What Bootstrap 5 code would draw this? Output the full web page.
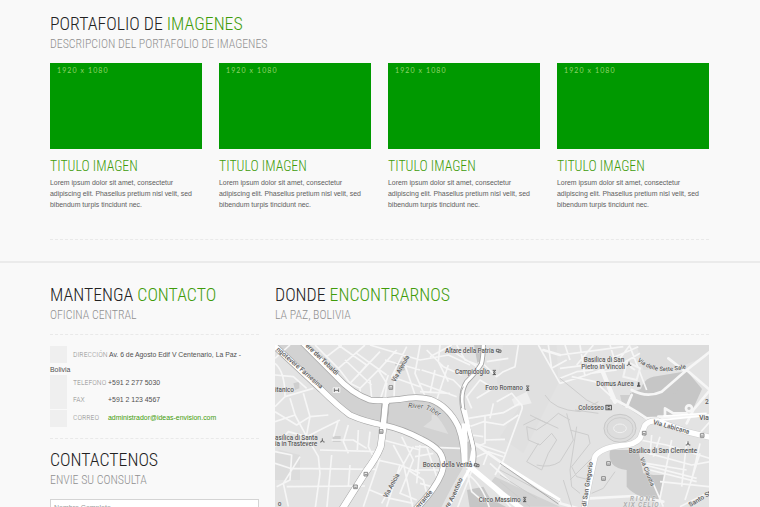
<!DOCTYPE html>
<html lang="es">
<head>
<meta charset="utf-8">
<meta name="viewport" content="width=device-width, initial-scale=1">
<title>Portafolio de imagenes</title>
<link href="https://cdn.jsdelivr.net/npm/bootstrap@5.3.0/dist/css/bootstrap.min.css" rel="stylesheet">
<style>
html,body{height:507px;overflow:hidden}
body{background:#f9f9f9;color:#666;font:6.93px/11.2px "Liberation Sans",Arial,sans-serif}
.page-wrap{width:659px;margin-left:50px}
.title,.subtitle,.item-title,.field-label{font-family:Roboto,sans-serif;font-stretch:75%;font-weight:300;margin:0;white-space:nowrap}
.title{font-size:17.8px;line-height:20px;color:#222}
.title span,.item-title{color:#3f9c0b}
.subtitle{font-size:11.88px;line-height:16px;color:#909090;margin-top:2px}
.item-title{font-size:13.85px;line-height:18px;margin:8px 0 2px}
.portfolio{padding-top:14px;height:261px}
.gallery{display:grid;grid-template-columns:repeat(4,152px);column-gap:17px;margin-top:11px}
.thumb{height:86px;background:#009900;color:#8fd468;font:7px/9px Lato,sans-serif;letter-spacing:1.1px;padding:3px 0 0 7px}
.item-text{white-space:nowrap;color:#606060}
.dashed{border-top:1px dashed #e9e9e9}
.portfolio .dashed{margin-top:28px}
.col-contact .dashed{margin:11px 0}
.col-map .dashed{margin:11px 0 10px}
.divider{height:2px;background:#ebebeb}
.lower{padding-top:22px}
.col-contact{width:209px}
.col-map{width:434px}
.swatch{width:17px;height:17px;background:#efefef;margin-right:6px;flex:none}
.entry{height:17.5px;line-height:15.6px;white-space:nowrap}
.entry-first{line-height:17px}
.field-label{font-size:7.8px;width:35px;color:#909090;flex:none}
.entry-first .field-label{width:36px}
.value{color:#505050}
.entry-first .value{font-size:6.85px}
.mail{color:#3f9c0b;text-decoration:none}
.field{font:7px/12px "Liberation Sans",Arial,sans-serif;height:17px;border:1px solid #d4d4d4;border-radius:0;padding:0 3px;background:#fff;min-height:0;margin-top:11px}
.field::placeholder{color:#999;opacity:1}
.map{width:434px;height:162px}
.map text{font-family:Roboto,sans-serif;font-size:19.5px;font-weight:500;fill:#5a5a5a;stroke:#ececec;stroke-width:2px;paint-order:stroke;stroke-linejoin:round}
</style>
</head>
<body>
<section class="portfolio">
 <div class="page-wrap">
  <h2 class="title">PORTAFOLIO DE <span>IMAGENES</span></h2>
  <h3 class="subtitle">DESCRIPCION DEL PORTAFOLIO DE IMAGENES</h3>
  <div class="gallery">
   <article><div class="thumb">1920 x 1080</div><h4 class="item-title">TITULO IMAGEN</h4><p class="item-text mb-0">Lorem ipsum dolor sit amet, consectetur<br>adipiscing elit. Phasellus pretium nisl velit, sed<br>bibendum turpis tincidunt nec.</p></article>
   <article><div class="thumb">1920 x 1080</div><h4 class="item-title">TITULO IMAGEN</h4><p class="item-text mb-0">Lorem ipsum dolor sit amet, consectetur<br>adipiscing elit. Phasellus pretium nisl velit, sed<br>bibendum turpis tincidunt nec.</p></article>
   <article><div class="thumb">1920 x 1080</div><h4 class="item-title">TITULO IMAGEN</h4><p class="item-text mb-0">Lorem ipsum dolor sit amet, consectetur<br>adipiscing elit. Phasellus pretium nisl velit, sed<br>bibendum turpis tincidunt nec.</p></article>
   <article><div class="thumb">1920 x 1080</div><h4 class="item-title">TITULO IMAGEN</h4><p class="item-text mb-0">Lorem ipsum dolor sit amet, consectetur<br>adipiscing elit. Phasellus pretium nisl velit, sed<br>bibendum turpis tincidunt nec.</p></article>
  </div>
  <div class="dashed"></div>
 </div>
</section>
<div class="divider"></div>
<section class="lower">
 <div class="page-wrap d-flex justify-content-between">
  <div class="col-contact">
   <h2 class="title">MANTENGA <span>CONTACTO</span></h2>
   <h3 class="subtitle">OFICINA CENTRAL</h3>
   <div class="dashed"></div>
   <div class="entry entry-first d-flex"><span class="swatch"></span><span class="field-label">DIRECCIÓN</span><span class="value">Av. 6 de Agosto Edif V Centenario, La Paz -</span></div>
   <div class="value">Bolivia</div>
   <div class="entry d-flex"><span class="swatch"></span><span class="field-label">TELEFONO</span><span class="value">+591 2 277 5030</span></div>
   <div class="entry d-flex"><span class="swatch"></span><span class="field-label">FAX</span><span class="value">+591 2 123 4567</span></div>
   <div class="entry d-flex"><span class="swatch"></span><span class="field-label">CORREO</span><a class="mail" href="#">administrador@ideas-envision.com</a></div>
   <div class="dashed"></div>
   <h2 class="title">CONTACTENOS</h2>
   <h3 class="subtitle">ENVIE SU CONSULTA</h3>
   <input class="field form-control" placeholder="Nombre Completo">
  </div>
  <div class="col-map">
   <h2 class="title">DONDE <span>ENCONTRARNOS</span></h2>
   <h3 class="subtitle">LA PAZ, BOLIVIA</h3>
   <div class="dashed"></div>
   <svg class="map d-block" viewBox="15 15 1302 486" preserveAspectRatio="none">
    <defs>
     <path id="bankL" d="M0 5L155 150Q200 195 240 225Q285 245 340 255Q400 268 455 298Q490 315 508 335Q528 365 515 400Q495 450 435 510"/>
     <path id="bankR" d="M95 5L200 110Q245 160 300 180Q320 184 390 178Q440 168 480 178Q535 198 565 260Q584 310 583 380"/>
     <path id="bridge" d="M348 182L341 255L332 320Q320 352 287 396L215 510"/>
     <path id="core" d="M640 10Q640 50 634 72Q620 95 590 125Q570 155 578 205Q590 250 603 295Q618 345 608 375"/>
     <path id="labic" d="M1320 292L1250 275L1165 243Q1137 240 1125 256L1110 295Q1095 315 1050 317Q990 325 975 350Q963 400 942 510"/>
     <path id="t1" d="M18 30L178 169"/><path id="t2" d="M106 19L215 122"/>
     <path id="t3" d="M466 209Q490 214 535 252"/>
     <path id="t4" d="M1102 62Q1160 117 1275 76"/>
     <path id="t5" d="M1148 252L1290 291"/>
     <path id="t6" d="M1109 355L1155 470"/>
     <path id="t7" d="M948 500L973 340"/>
     <path id="t8" d="M535 505Q565 460 587 390"/>
    </defs>
    <rect x="15" y="15" width="1302" height="486" fill="#e3e3e3"/>
    <g fill="#dcdcdc">
     <path d="M700 15H860L865 130L760 340L690 290L755 190L680 130Z" fill="#e0e0e0"/>
     <path d="M1100 15H1317V45L1220 85L1120 90Z"/><path d="M30 330L90 345V420L15 420V335Z"/>
     <path d="M675 410L870 500H735L660 430Z" fill="#d2d2d2"/>
     <path d="M725 178L770 155L785 190L735 200Z" fill="#eee"/>
    </g>
    <g fill="#c6c6c6">
     <path d="M25 5H85L190 110Q245 165 300 183L485 180Q545 205 570 270L578 385Q550 430 510 510H435Q512 440 520 385Q520 325 440 287Q390 260 340 252Q270 245 235 218L150 140L15 15Z" fill="#d2d2d2"/>
     <path d="M612 15H645V55L622 68Z"/><path d="M585 310Q605 295 612 315V365L592 370Z"/>
     <path d="M1080 160L1250 92L1296 147L1265 215L1185 240L1120 235L1075 205Z"/><path d="M1150 110Q1110 120 1110 170L1220 160L1240 95Z"/>
     <path d="M1020 330H1105L1120 400L1150 405H1185L1165 480Q1100 475 1070 440V390Q1010 385 1020 330Z"/>
     <path d="M591 450L640 440L660 475L725 510H600Z"/>
     <path d="M374 68L397 62L405 90L385 98Z"/><path d="M188 288H212V306H188ZM70 130L88 125V145L75 150Z" fill="#cecece"/>
     <path d="M1050 165H1080V205L1058 198Z" fill="#cecece"/>
     <path d="M485 225Q500 215 535 282L460 260L485 240Z" fill="#dedede"/>
    </g>
    <g fill="none" stroke="#f6f6f6" stroke-width="5" stroke-linejoin="round">
     <path d="M15 70Q45 95 45 170L15 200M45 170L130 145M60 175L75 225L110 290L145 350L150 400L135 510M15 105L70 110L110 145M75 225L15 245M100 160L120 230L175 225M120 230L105 310M15 320L55 275L110 290L160 265L210 240M15 370L60 385L320 388M50 440L285 438M90 350L40 430L55 500M15 335L65 345L60 420L20 440M185 345L170 510M240 375L235 440M150 330L330 335M185 300L250 300L290 325M205 240L190 290M235 255L220 305L235 340M265 270L262 330M300 275L295 320L310 350M15 215L80 255L120 230"/>
     <path d="M135 15L205 85L285 15M205 85L240 130L330 35M170 50L215 15M240 130L270 145L330 85L380 30M225 60L305 135M260 40L350 105M205 15L290 75L260 110M270 145V178M300 120L305 175M325 90L350 130L345 180M355 105L330 180M375 95L372 175M300 15L450 60M345 60L450 90M410 20L365 110L450 140M400 60L440 180M450 15L435 100L470 180M15 55L60 15"/>
     <path d="M450 60L535 45L600 75M470 30L520 80L575 105M510 15L505 65L535 125M455 90L550 120L580 150M450 130L560 170M495 90L480 160M535 75L500 180M550 35L620 80M560 15L585 60L625 75M480 50L545 15M450 155L540 160"/>
     <path d="M640 72L680 110L700 95L735 80L745 15M650 65L715 55M605 205L590 170L630 120L670 145L620 175M595 235L700 218L750 190L725 160L680 185M750 190Q760 195 755 210L700 360L675 405M585 265L640 245L700 255L745 225M645 225V310L620 320M605 285L640 290M615 310L705 340M645 300L705 298M610 355L655 335L700 350M655 335L640 375M670 190L660 235"/>
     <path d="M435 320L570 325M435 350L490 340M450 315L440 430M470 320L500 410M435 390L510 390M450 430L485 440M300 355L390 375L450 400M390 375L350 500M340 300L450 330M330 355L280 500M300 450L360 475L430 490M370 315L400 370L430 510M395 290L430 360L390 460L440 480M430 320L335 490M415 390L460 420L475 480"/>
     <path d="M805 15L850 95L870 130M835 15L845 85L890 60M870 130L950 105L1035 75L1080 15M870 85L990 70L1105 20M885 15L900 60M930 15L945 110M1020 15L1040 80L1110 40M870 45L950 35L1060 20M920 75L970 15M960 100L1040 90M990 75L1025 175M905 110L975 125L1040 185M870 115L920 95L970 90M1080 20L1130 150"/>
     <path d="M1145 420L1180 500M1110 300L1190 315L1320 355M1118 335L1265 375L1320 365M1130 370L1250 390M1145 285L1140 345M1170 290L1150 350M1205 300L1165 500M1250 305L1235 440M1290 310L1265 420M1125 375L1280 415M1140 390L1280 425M1170 425L1320 440M1290 340L1245 480M1230 500L1320 455M1280 290L1320 245"/>
     <path d="M590 390L605 455L640 485M610 380L560 510M625 395L730 510M590 400Q640 435 660 510M660 370L720 425"/>
    </g>
    <g fill="none" stroke="#f6f6f6" stroke-width="8" stroke-linecap="round" stroke-linejoin="round">
     <path d="M1085 150Q1130 175 1175 155L1250 90L1320 35M1250 90L1320 150M1240 90L1195 55M1025 175Q1070 195 1130 235L1280 228M1320 150L1270 210L1250 250M1185 225V205L1210 220L1250 220M1165 230H1255"/>
     <path d="M1085 165L1070 200M820 30L870 45M605 305L690 365L870 485M870 490L942 510M960 475L1090 468L1180 485"/>
     <circle cx="1257" cy="205" r="9"/><path d="M990 75L1035 185" stroke-width="13"/>
    </g>
    <g fill="none" stroke="#cdcdcd" stroke-width="3">
     <path d="M780 225L830 250L800 270L770 260L775 300L810 315L845 280L860 300L835 340L815 390L770 365L805 310M760 255L800 235L865 265M830 250L865 220L900 240M890 220L910 300L870 365Q840 385 800 375M900 270L955 285L960 310L905 380L920 410L960 420M920 260L900 390L905 440L930 460M825 165Q850 210 930 215L985 185M970 350L900 420M690 390L870 485M690 405L800 475M690 425L780 500"/>
     <path d="M870 115L950 180L1000 205M915 210L985 220M1035 395L1000 445L965 460M880 420L905 500"/>
     <ellipse cx="1050" cy="265" rx="48" ry="42" fill="#ddd" stroke="#c8c8c8"/><ellipse cx="1050" cy="265" rx="39" ry="32"/><ellipse cx="1050" cy="265" rx="19" ry="13" stroke="#f1f1f1"/>
     <path d="M1070 65L1110 85L1100 120L1060 110ZM1080 80L1095 90" fill="#e5e5e5" stroke="#f3f3f3" stroke-width="6"/>
    </g>
    <g fill="none" stroke="#a5a5a5" stroke-width="20">
     <use href="#bankL"/><use href="#bankR"/><use href="#bridge" stroke-width="22"/><use href="#core" stroke-width="15"/>
    </g>
    <g fill="none" stroke="#fff" stroke-width="16">
     <use href="#bankL"/><use href="#bankR"/><use href="#bridge" stroke-width="19"/><use href="#core" stroke-width="10"/>
     <path d="M583 250L585 370L605 385L695 460L760 510" stroke-width="16"/><path d="M585 210L610 325L600 380" stroke-width="10"/><path d="M600 385L560 455L530 510M695 370L870 480" stroke-width="9"/>
     <use href="#labic" stroke="#cfcfcf" stroke-width="19"/><use href="#labic" stroke-width="16"/>
     <path d="M1130 245L1320 225M1180 228L1310 220" stroke-width="5"/>
     <path d="M345 173V263" stroke-width="12"/>
    </g>
    <path d="M356 192L350 250M336 192L331 247M690 370L865 492M575 205Q565 165 580 140" fill="none" stroke="#a0a0a0" stroke-width="2.5"/>
    <g fill="#eee" stroke="#777" stroke-width="2.5">
     <path d="M357 137h11v11h-11zM328 269h11v11h-11zM282 397h11v11h-11zM251 435h11v11h-11zM1117 274h11v11h-11zM1291 281h11v11h-11zM1010 365h11v11h-11zM995 410h11v11h-11z"/>
     <path d="M359 144H366M330 276H337M284 404H291M253 442H260M1119 281H1126M1293 288H1300M1012 372H1019M997 417H1004"/>
     <rect x="1006" y="194" width="20" height="17" rx="2" fill="#666" stroke="none"/><path d="M1011 208V199L1016 204L1021 199V208" fill="none" stroke="#fff"/>
    </g>
    <rect x="188" y="142" width="23" height="17" rx="3" fill="#f0f0f0"/>
    <g fill="none" stroke="#555" stroke-width="2.5">
     <path d="M668 91h10M668 104h10M670 93l6 5-6 5h6l-6-5 6-5M768 138h10M768 151h10M770 140l6 5-6 5h6l-6-5 6-5M759 472h10M759 485h10M761 474l6 5-6 5h6l-6-5 6-5"/>
     <path d="M679 28h8v7h-8zM687 30h6v7h-10M613 371h8v7h-8zM621 373h6v7h-10M150 306h4l3-6 3 6h4M157 300v-5M1070 76h4l3-6 3 6h4M1077 70v-5M1247 315h4l3-6 3 6h4M1254 309v-5M193 145v11M206 145v11M193 151h13"/>
     <path d="M1106 127v10M1101 138h10" stroke-width="5"/>
    </g>
    <g>
     <text x="15" y="156" textLength="57">itanico</text>
     <text x="15" y="300" textLength="128">asilica di Santa</text><text x="15" y="319" textLength="127">ia in Trastevere</text>
     <text x="525" y="39" textLength="147">Altare della Patria</text><text x="555" y="103" textLength="104">Campidoglio</text>
     <text x="646" y="150" textLength="113">Foro Romano</text><text x="458" y="382" textLength="149">Bocca della Verità</text>
     <text x="626" y="486" textLength="126">Circo Massimo</text><text x="941" y="67" textLength="122">Basilica di San</text>
     <text x="934" y="86" textLength="131">Pietro in Vincoli</text><text x="979" y="138" textLength="112">Domus Aurea</text>
     <text x="925" y="209" textLength="77">Colosseo</text><text x="1076" y="339" textLength="205" lengthAdjust="spacingAndGlyphs">Basilica di San Clemente</text>
     <text transform="translate(376 127) rotate(-61)" textLength="88" lengthAdjust="spacingAndGlyphs">Via Arenula</text>
     <text transform="translate(351 475) rotate(-62)" textLength="80" lengthAdjust="spacingAndGlyphs">Via Anicia</text>
     <text transform="translate(1261 501) rotate(-31)">Santo St</text>
     <text transform="translate(445 508) rotate(-50)" textLength="67">errande</text>
     <text x="1288" y="241">Via</text><text x="1305" y="192">2</text><text x="23" y="499">o</text>
     <text><textPath href="#t1">ngotevere Farnesina</textPath></text>
     <text><textPath href="#t2">ere dei Tebaldi</textPath></text>
     <text x="414" y="203" style="font-size:21px;font-style:italic;font-weight:400" transform="rotate(4 414 203)">River</text>
     <text style="font-size:21px;font-style:italic;font-weight:400"><textPath href="#t3">Tiber</textPath></text>
     <text style="font-size:18px"><textPath href="#t4">Via delle Sette Sale</textPath></text>
     <text><textPath href="#t5">Via Labicana</textPath></text>
     <text style="font-size:18px"><textPath href="#t6">Via Claudia</textPath></text>
     <text><textPath href="#t7">di San Gregorio</textPath></text>
     <text><textPath href="#t8">re Aventino</textPath></text>
     <g style="font-style:italic"><text x="1080" y="482" textLength="76" style="fill:#aaa">RIONE</text><text x="1060" y="502" textLength="106" style="fill:#aaa">XIX CELIO</text></g>
    </g>
   </svg>
  </div>
 </div>
</section>
<script src="https://cdn.jsdelivr.net/npm/bootstrap@5.3.0/dist/js/bootstrap.bundle.min.js"></script>
</body>
</html>
